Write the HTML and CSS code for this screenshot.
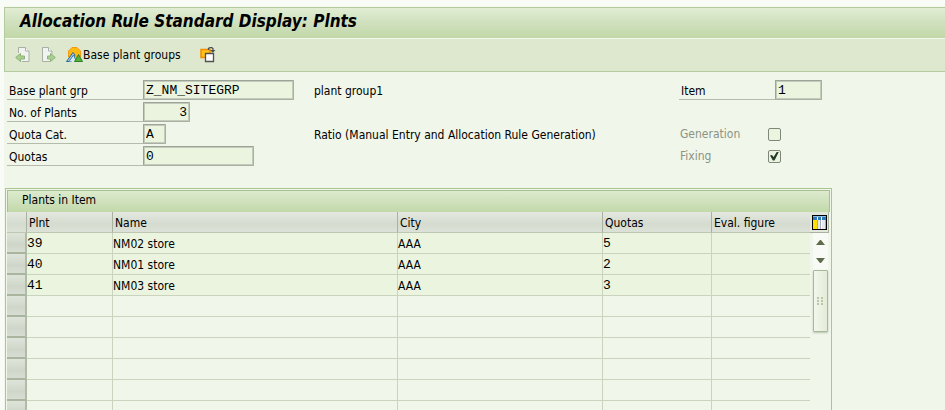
FILE: index.html
```html
<!DOCTYPE html>
<html lang="en">
<head>
    <meta charset="UTF-8">
    <meta name="viewport" content="width=device-width, initial-scale=1.0">
    <title>Allocation Rule Standard Display: Plnts</title>
    <link rel="stylesheet" href="styles.css">
</head>
<body>
    <div class="screen">
        <header class="app-header">
            <h1>Allocation Rule Standard Display: Plnts</h1>
            <div class="toolbar">
                <button class="tool" type="button" aria-label="Previous item">
                    <svg width="16" height="17" viewBox="0 0 16 17">
                        <path d="M3.5 7V1.5h7L14 5v10.5H7" fill="#f1f3ef" stroke="#a9aea6"/>
                        <path d="M10.5 1.5V5H14" fill="#fff" stroke="#a9aea6"/>
                        <path d="M.7 11.5 5.5 7.5V10h4v3h-4v2.5z" fill="#a9cf92" stroke="#8fb27b"/>
                    </svg>
                </button>
                <button class="tool tool-next" type="button" aria-label="Next item">
                    <svg width="16" height="17" viewBox="0 0 16 17">
                        <path d="M9 15.5H1.5v-14h6L11 5v3" fill="#f1f3ef" stroke="#a9aea6"/>
                        <path d="M7.5 1.5V5H11" fill="#fff" stroke="#a9aea6"/>
                        <path d="M14.3 11.5 9.5 7.5V10h-3v3h3v2.5z" fill="#a9cf92" stroke="#8fb27b"/>
                    </svg>
                </button>
                <button class="tool tool-groups" type="button">
                    <svg width="17" height="17" viewBox="0 0 17 17">
                        <path d="M2.5 11V5L6 1.5h5L14.5 5v6z" fill="#ffba12" stroke="#f39a10"/>
                        <path d="M.5 15.5 7 6.5 9 9l-3.5 6.5z" fill="#a4cbe6" stroke="#2b658e"/>
                        <path d="M3 15.5 7.5 9l3 6.5" fill="#d9ebf5" stroke="#3f7ca3"/>
                        <path d="M8.5 15.5 12.5 8.5l4 7z" fill="#55b33b" stroke="#2e7e2a"/>
                    </svg>
                    <span>Base plant groups</span>
                </button>
                <button class="tool" type="button" aria-label="Switch view">
                    <svg width="16" height="16" viewBox="0 0 16 16">
                        <path d="M1 2.5h9v8H1z" fill="#ffc21a" stroke="#f28c00" stroke-width="1.5"/>
                        <path d="M5.5 6.5h8v8h-8z" fill="#fff" stroke="#505050" stroke-width="1.3"/>
                        <path d="M8.5 3V1.5L10 .7h2l1 1v2" fill="none" stroke="#505050" stroke-width="1.3"/>
                        <path d="M10 3h5.5l-2.7 2.8z" fill="#505050"/>
                    </svg>
                </button>
            </div>
        </header>

        <form class="details">
            <div class="fields">
                <div class="field">
                    <label for="plantGrp">Base plant grp</label>
                    <input class="input-grp" type="text" id="plantGrp" value="Z_NM_SITEGRP" readonly>
                </div>
                <div class="field">
                    <label for="plantCount">No. of Plants</label>
                    <input class="input-count" type="text" id="plantCount" value="3" readonly>
                </div>
                <div class="field">
                    <label for="quotaCat">Quota Cat.</label>
                    <input class="input-cat" type="text" id="quotaCat" value="A" readonly>
                </div>
                <div class="field">
                    <label for="quotas">Quotas</label>
                    <input class="input-quotas" type="text" id="quotas" value="0" readonly>
                </div>
            </div>

            <div class="descriptions">
                <div class="line">plant group1</div>
                <div class="line"></div>
                <div class="line">Ratio (Manual Entry and Allocation Rule Generation)</div>
            </div>

            <div class="item">
                <div class="field">
                    <label for="item">Item</label>
                    <input class="input-item" type="text" id="item" value="1" readonly>
                </div>
                <div class="line"></div>
                <div class="check">
                    <label for="generation">Generation</label>
                    <input type="checkbox" id="generation" disabled>
                </div>
                <div class="check">
                    <label for="fixing">Fixing</label>
                    <input type="checkbox" id="fixing" checked disabled>
                </div>
            </div>
        </form>

        <section class="panel">
            <h2>Plants in Item</h2>
            <div class="grid">
                <table>
                    <colgroup>
                        <col class="col-select">
                        <col class="col-plnt">
                        <col class="col-name">
                        <col class="col-city">
                        <col class="col-quotas">
                        <col class="col-eval">
                    </colgroup>
                    <thead>
                        <tr>
                            <th></th>
                            <th>Plnt</th>
                            <th>Name</th>
                            <th>City</th>
                            <th>Quotas</th>
                            <th>Eval. figure</th>
                        </tr>
                    </thead>
                    <tbody>
                        <tr class="filled">
                            <th></th>
                            <td class="mono">39</td>
                            <td>NM02 store</td>
                            <td>AAA</td>
                            <td class="mono">5</td>
                            <td></td>
                        </tr>
                        <tr class="filled">
                            <th></th>
                            <td class="mono">40</td>
                            <td>NM01 store</td>
                            <td>AAA</td>
                            <td class="mono">2</td>
                            <td></td>
                        </tr>
                        <tr class="filled">
                            <th></th>
                            <td class="mono">41</td>
                            <td>NM03 store</td>
                            <td>AAA</td>
                            <td class="mono">3</td>
                            <td></td>
                        </tr>
                        <tr><th></th><td></td><td></td><td></td><td></td><td></td></tr>
                        <tr><th></th><td></td><td></td><td></td><td></td><td></td></tr>
                        <tr><th></th><td></td><td></td><td></td><td></td><td></td></tr>
                        <tr><th></th><td></td><td></td><td></td><td></td><td></td></tr>
                        <tr><th></th><td></td><td></td><td></td><td></td><td></td></tr>
                        <tr><th></th><td></td><td></td><td></td><td></td><td></td></tr>
                    </tbody>
                </table>

                <div class="side">
                    <button class="config" type="button" aria-label="Table settings">
                        <svg width="15" height="15" viewBox="0 0 15 15">
                            <path d="M0 0h15v15H0z" fill="#000"/>
                            <path d="M1 1h13v13H1z" fill="#fff"/>
                            <path d="M1 2h4v3H1zM6 2h3v3H6zM10 2h4v3h-4z" fill="#2d79b9"/>
                            <path d="M1 1h13v1H1z" fill="#8bbde2"/>
                            <path d="M1 5h4v9H1z" fill="#ffe100"/>
                            <path d="M6 5h2v9H6zM10 5h3v9h-3z" fill="#e4e8f0"/>
                            <path d="M5 5h1v9H5zM8 5h1v9H8zM13 5h1v9h-1z" fill="#a4acb8"/>
                        </svg>
                    </button>
                    <div class="scrollbar">
                        <button class="arrow" type="button" aria-label="Scroll up">
                            <svg width="9" height="5" viewBox="0 0 9 5"><path d="M0 5 4 0h1l4 5z" fill="#5d6d4a"/></svg>
                        </button>
                        <button class="arrow" type="button" aria-label="Scroll down">
                            <svg width="9" height="5" viewBox="0 0 9 5"><path d="M0 0h9L5 5H4z" fill="#5d6d4a"/></svg>
                        </button>
                        <div class="thumb">
                            <svg width="6" height="9" viewBox="0 0 6 9">
                                <path d="M0 0h2v2H0zM4 0h2v2H4zM0 3h2v2H0zM4 3h2v2H4zM0 6h2v2H0zM4 6h2v2H4z" fill="#b9c6a8"/>
                            </svg>
                        </div>
                    </div>
                </div>
            </div>
        </section>
    </div>
</body>
</html>
```

FILE: styles.css
```css
* {
    box-sizing: border-box;
}

body {
    margin: 0;
    height: 100vh;
    overflow: hidden;
    background: #f8fbf6;
    color: #000;
    font-family: "DejaVu Sans Condensed", "DejaVu Sans", sans-serif;
    font-size: 12px;
    line-height: 20px;
}

button {
    padding: 0;
    border: none;
    background: none;
    color: inherit;
    font: inherit;
}

svg {
    display: block;
}

.screen {
    margin-left: 4px;
    padding-top: 7px;
    min-height: 100vh;
    background: linear-gradient(#f8fbf6 6px, #f0f6ea 7px);
}

/* Title and toolbar */
.app-header {
    border: 1px solid #b4cb9f;
    border-right: none;
    background: #dde8cf;
}

h1 {
    margin: 0;
    padding: 0 15px;
    border-bottom: 1px solid #f4f9ee;
    background: linear-gradient(#e2edd3, #cfe0be 50%, #c2d8a8);
    font-size: 17px;
    font-style: italic;
    font-weight: bold;
    line-height: 26px;
    height: 31px;
}

.toolbar {
    display: flex;
    align-items: center;
    height: 32px;
    padding: 0 10px 1px;
}

.tool {
    display: flex;
    align-items: center;
}

.tool-next {
    margin: 0 9px 0 10px;
}

.tool-groups {
    margin-right: 19px;
}

/* Form */
.details {
    display: flex;
    padding: 8px 3px 0;
}

.fields,
.descriptions,
.item {
    display: flex;
    flex-direction: column;
    gap: 2px;
}

.fields {
    width: 307px;
}

.descriptions {
    width: 365px;
}

.field,
.line,
.check {
    display: flex;
    height: 20px;
    line-height: 22px;
}

.field label {
    width: 136px;
    padding-left: 2px;
    border-bottom: 1px solid #b5bcae;
}

.item .field label {
    width: 96px;
}

.field input {
    height: 20px;
    padding: 1px 2px 0;
    border: 1px solid #9da398;
    border-right-color: #a9afa4;
    border-bottom-color: #a9afa4;
    border-radius: 1px;
    background: #eaf4de;
    box-shadow: inset 0 0 0 1px #c3cbb9;
    color: #000;
    font-family: "Liberation Mono", monospace;
    font-size: 13px;
    outline: none;
}

.input-grp {
    width: 151px;
}

.field .input-count {
    width: 47px;
    text-align: right;
}

.input-cat {
    width: 23px;
}

.input-quotas {
    width: 111px;
}

.input-item {
    width: 47px;
}

.check {
    align-items: center;
    color: #8b9385;
}

.check label {
    width: 89px;
    padding-left: 1px;
}

.check input {
    display: grid;
    place-content: center;
    width: 13px;
    height: 13px;
    margin: 0;
    border: 1px solid #7f877a;
    border-radius: 2px;
    background: #eaf4de;
    appearance: none;
}

.check input:checked::before {
    content: "";
    width: 9px;
    height: 9px;
    background: #243b2b;
    clip-path: polygon(0 45%, 22% 38%, 40% 62%, 78% 0, 100% 0, 50% 100%, 32% 100%);
}

/* Plants table */
.panel {
    max-width: 827px;
    margin: 22px 0 0 1px;
    padding: 1px;
    border: 1px solid #a9c78d;
    border-bottom: none;
}

h2 {
    margin: 0;
    padding: 0 14px;
    border: 1px solid #a9bf96;
    border-bottom: none;
    background: linear-gradient(#dcebcc, #cfe1bd 50%, #c2d9a9);
    font-size: 12px;
    font-weight: normal;
    line-height: 18px;
    height: 22px;
}

.grid {
    display: flex;
}

table {
    flex: 1;
    table-layout: fixed;
    border-collapse: separate;
    border-spacing: 0;
}

.col-select {
    width: 20px;
}

.col-plnt {
    width: 86px;
}

.col-name {
    width: 285px;
}

.col-city {
    width: 205px;
}

.col-quotas {
    width: 109px;
}

th,
td {
    height: 21px;
    padding: 2px 1px 0 0;
    border-right: 1px solid #c9d3bd;
    border-bottom: 1px solid #c9d3bd;
    font-weight: normal;
    line-height: 18px;
    text-align: left;
}

thead th {
    padding-left: 2px;
    border-right-color: #a9b29f;
    border-bottom-color: #bdc7b1;
    background: linear-gradient(#e4e8e0, #d5dbcf 60%, #dde2d8);
}

th:last-child,
td:last-child {
    border-right: none;
}

tbody th {
    border-right: 2px solid #b1bca6;
    border-bottom: 2px solid #a9b59e;
    background: linear-gradient(#dfe4da, #cfd6c9 60%, #d8ddd3);
}

.filled td {
    background: #eaf4de;
}

.filled .mono {
    font-family: "Liberation Mono", monospace;
    font-size: 13px;
}

.side {
    width: 20px;
}

.config {
    display: flex;
    align-items: center;
    justify-content: center;
    width: 19px;
    height: 21px;
    border-right: 1px solid #a9b29f;
    border-bottom: 1px solid #a9b29f;
    background: #e1e7db;
}

.scrollbar {
    width: 15px;
    margin: 0 auto;
    background: #f8fbf5;
}

.arrow {
    display: flex;
    align-items: center;
    justify-content: center;
    width: 15px;
    height: 18px;
}

.thumb {
    display: flex;
    align-items: center;
    justify-content: center;
    height: 62px;
    margin-top: 1px;
    border: 1px solid #a9b79a;
    border-radius: 1px;
    background: linear-gradient(to right, #f2f7ec, #e3ecd8);
    box-shadow: 0 1px 2px #bac4b0;
}
```
